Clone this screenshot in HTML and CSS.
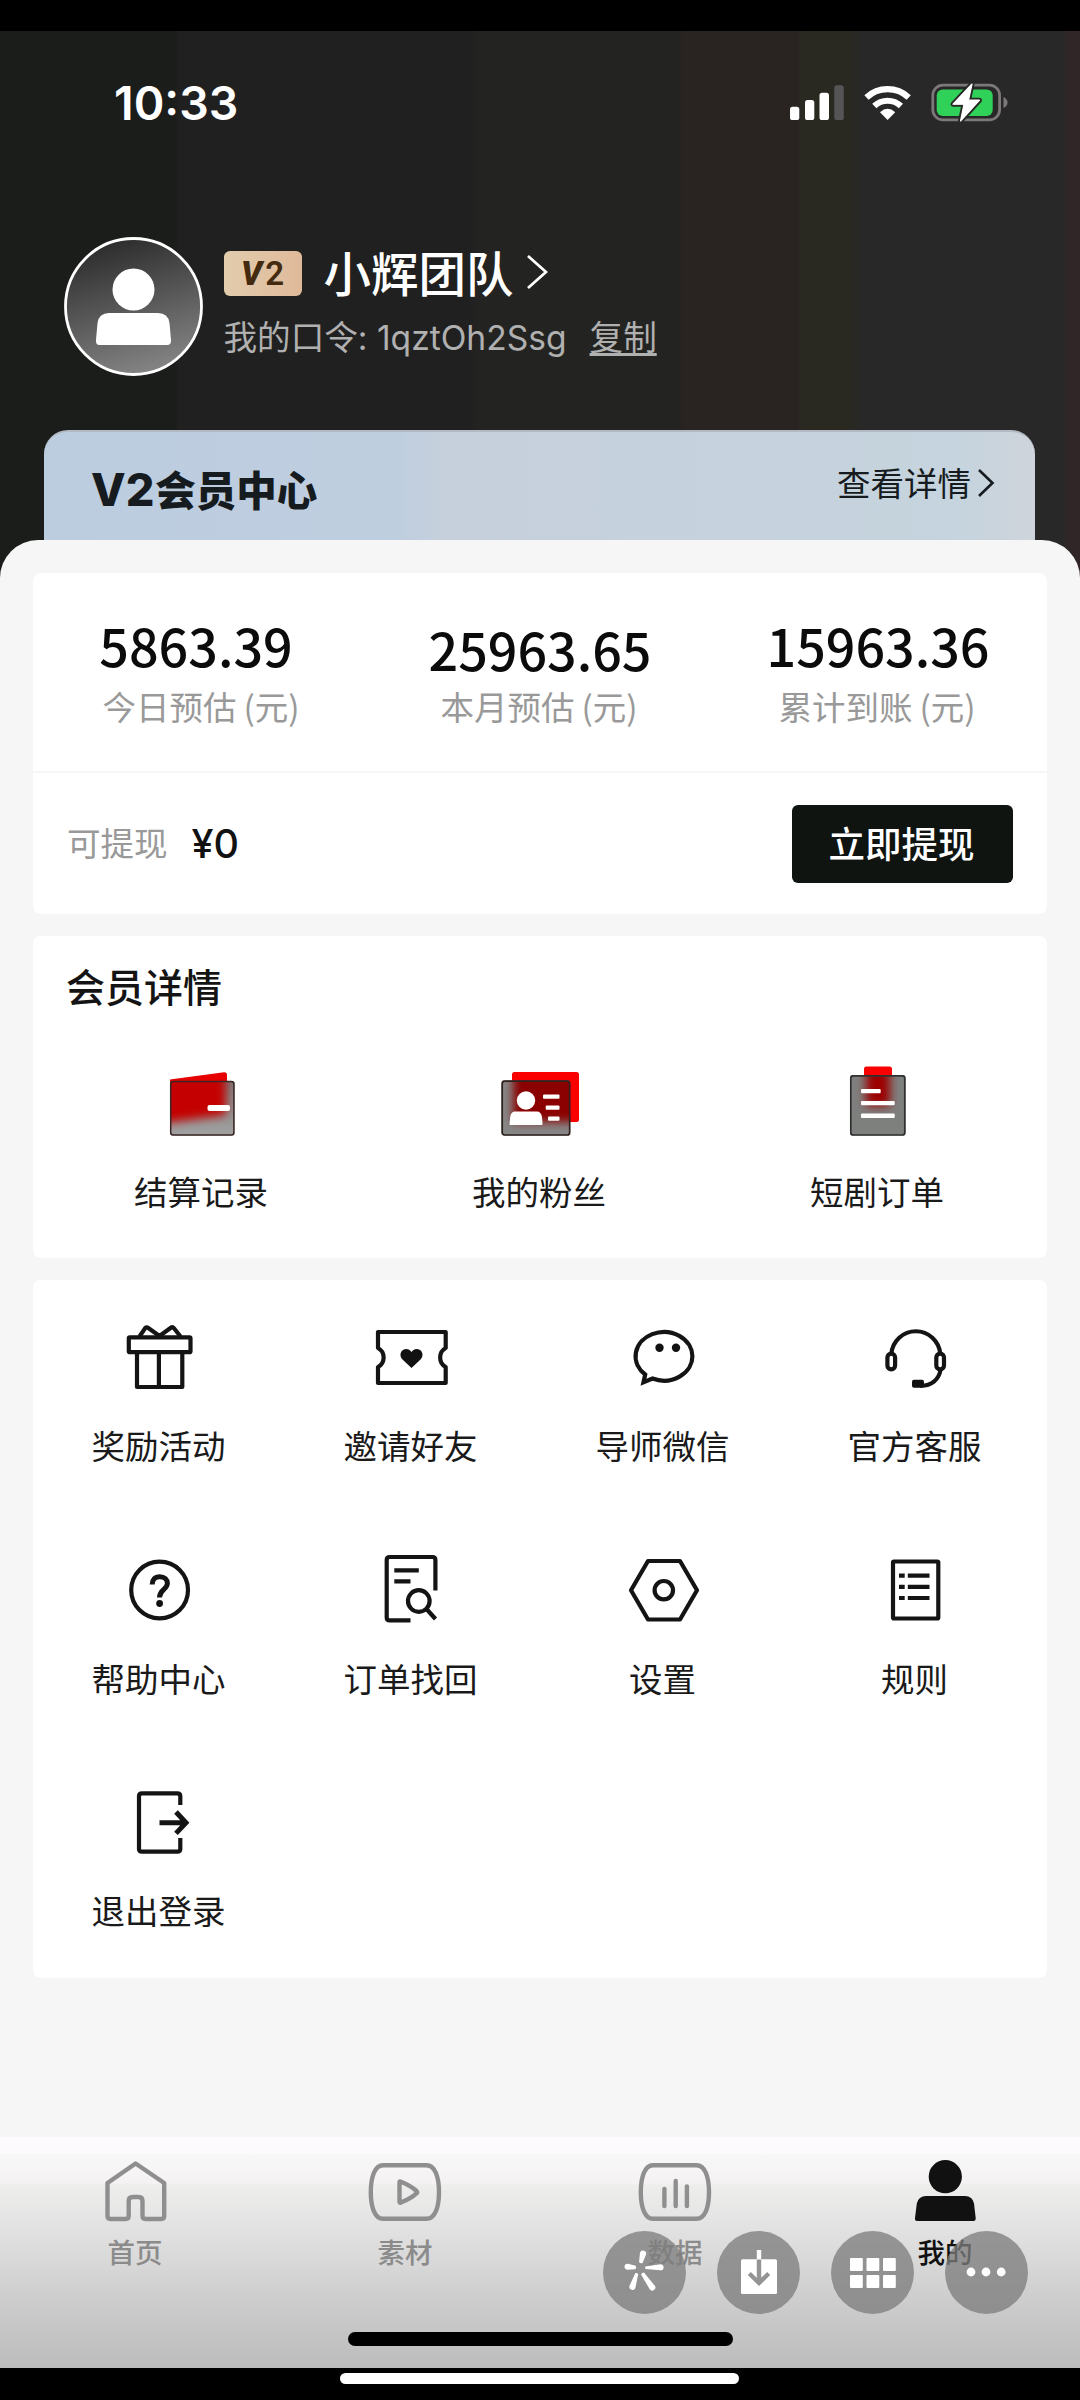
FILE: index.html
```html
<!DOCTYPE html>
<html lang="zh-CN">
<head>
<meta charset="utf-8">
<title>我的</title>
<link rel="stylesheet" href="styles.css">
</head>
<body>
<div class="phone">
  <header class="hero">
    <div class="status">
      <span class="time">10:33</span>
      <svg class="status-icons" width="230" height="50" viewBox="0 0 230 50">
        <g fill="#fff">
          <rect x="5" y="28.700" width="9.300" height="13.300" rx="2.600"/>
          <rect x="20" y="22" width="9.300" height="20" rx="2.600"/>
          <rect x="34.500" y="14.700" width="9.500" height="27.300" rx="2.600"/>
          <rect x="49.300" y="7.300" width="9.500" height="34.700" rx="2.600" fill="#555556"/>
        </g>
        <g fill="none" stroke="#fff" stroke-width="6.200">
          <path d="M81.500 19.500 A31 31 0 0 1 123.700 19.500"/>
          <path d="M89.300 28 A19.500 19.500 0 0 1 115.900 28"/>
        </g>
        <path d="M102.600 42 L95 34.200 Q102.600 27.500 110.200 34.200 Z" fill="#fff"/>
        <rect x="147.800" y="7.200" width="66.800" height="34.600" rx="10" fill="none" stroke="#7d7878" stroke-width="2.800"/>
        <path d="M218.500 19 Q222.500 21 222.500 24.500 Q222.500 28 218.500 30 Z" fill="#7d7878"/>
        <rect x="151.700" y="11.600" width="56" height="26.400" rx="6" fill="#30d158"/>
        <path d="M187 6 L168 26.200 H179 L175.500 43 L194.500 22.200 H183.500 Z" fill="#fff" stroke="#262826" stroke-width="5" stroke-linejoin="round" paint-order="stroke"/>
        <path d="M187 6 L168 26.200 H179 L175.500 43 L194.500 22.200 H183.500 Z" fill="#fff" stroke="#fff" stroke-width="1.200" stroke-linejoin="round"/>
      </svg>
    </div>
    <div class="profile">
      <svg class="avatar" width="139" height="139" viewBox="0 0 139 139">
        <defs><linearGradient id="av" x1=".3" y1="0" x2=".6" y2="1"><stop offset="0" stop-color="#2a2a2a"/><stop offset="1" stop-color="#858585"/></linearGradient></defs>
        <circle cx="69.500" cy="69.500" r="68" fill="url(#av)" stroke="#fff" stroke-width="2.800"/>
        <circle cx="69.500" cy="52.500" r="21" fill="#fff"/>
        <path d="M45 76 H94 Q104 76 105.500 86 L107 103 Q107.500 108 103 108 H35.500 Q31.500 108 32 103 L33.500 86 Q35 76 45 76 Z" fill="#fff"/>
      </svg>
      <div class="who">
        <div class="name-row">
          <span class="level"><i>V</i><b>2</b></span>
          <span class="name">小辉团队</span>
          <svg width="22" height="36" viewBox="0 0 22 36"><path d="M2 2 L20 18 L2 34" fill="none" stroke="#fff" stroke-width="2.800"/></svg>
        </div>
        <div class="code-row"><span>我的口令: </span><span class="code">1qztOh2Ssg</span><span class="copy">复制</span></div>
      </div>
    </div>
    <div class="vip">
      <span class="vip-title"><span class="vip-level">V2</span>会员中心</span>
      <span class="vip-more">查看详情<svg width="18" height="30" viewBox="0 0 18 30"><path d="M2 2 L15.500 15 L2 28" fill="none" stroke="#161b20" stroke-width="2.600"/></svg></span>
    </div>
  </header>

  <main class="panel">
    <section class="card">
      <div class="stats">
        <div class="stat stat-today"><strong>5863.39</strong><span>今日预估<em>(元)</em></span></div>
        <div class="stat stat-month"><strong>25963.65</strong><span>本月预估<em>(元)</em></span></div>
        <div class="stat"><strong>15963.36</strong><span>累计到账<em>(元)</em></span></div>
      </div>
      <div class="withdraw">
        <span class="wd-label">可提现</span><span class="wd-value">¥0</span>
        <button class="wd-btn">立即提现</button>
      </div>
    </section>

    <section class="card member">
      <h2>会员详情</h2>
      <div class="trio">
        <div class="entry">
          <svg width="90" height="80" viewBox="0 0 90 80">
            <defs>
              <filter id="soft" x="-50%" y="-50%" width="200%" height="200%"><feGaussianBlur stdDeviation="5"/></filter>
              <clipPath id="c1"><rect x="13" y="17" width="64.500" height="54.500" rx="2.500"/></clipPath>
              <clipPath id="c2"><rect x="6.500" y="16.500" width="68.500" height="55" rx="2.500"/></clipPath>
              <clipPath id="c3"><rect x="17" y="11" width="55.500" height="60.500" rx="2.500"/></clipPath>
              <linearGradient id="g1" x1="0" y1="0" x2="0" y2="1"><stop offset="0" stop-color="#7c7c7c"/><stop offset="1" stop-color="#a2a2a2"/></linearGradient>
            </defs>
            <path d="M13 15.500 L67 8.200 Q70 8 70 11 V20 H13 Z" fill="#e60000"/>
            <g clip-path="url(#c1)"><rect x="13" y="17" width="65" height="55" fill="url(#g1)"/><path d="M0 5 H69 V51 L0 60 Z" fill="#c40000" filter="url(#soft)"/></g>
            <rect x="13.700" y="17.500" width="63.200" height="53.500" rx="2.500" fill="none" stroke="#3a2626" stroke-width="1.500"/>
            <rect x="50.500" y="41" width="22.500" height="6" rx="2" fill="#fff"/>
          </svg>
          <span>结算记录</span>
        </div>
        <div class="entry">
          <svg width="90" height="80" viewBox="0 0 90 80">
            <rect x="17" y="8" width="67" height="50" rx="2.500" fill="#fb0000"/>
            <g clip-path="url(#c2)"><rect x="6" y="16" width="70" height="56" fill="#868686"/><rect x="18" y="8" width="67" height="50" fill="#8b0000" filter="url(#soft)"/></g>
            <rect x="7.200" y="17.200" width="67.500" height="53.800" rx="2.500" fill="none" stroke="#2f2020" stroke-width="1.700"/>
            <g fill="#fff"><circle cx="31" cy="36.500" r="9.200"/><path d="M20 47.500 H42 Q46 47.500 47 53 L47.600 60 Q47.600 61 46.500 61 H15.500 Q14.400 61 14.500 60 L15.200 53 Q16 47.500 20 47.500 Z"/><rect x="48" y="30.500" width="16.500" height="4.300" rx="1"/><rect x="50.700" y="41.500" width="13.800" height="4.300" rx="1"/><rect x="53" y="52.400" width="11.500" height="4.300" rx="1"/></g>
          </svg>
          <span>我的粉丝</span>
        </div>
        <div class="entry">
          <svg width="90" height="80" viewBox="0 0 90 80">
            <rect x="31" y="2.500" width="28" height="28" rx="2.500" fill="#fb0000"/>
            <g clip-path="url(#c3)"><rect x="17" y="11" width="56" height="61" fill="#7e807e"/><rect x="33" y="2" width="24" height="40" fill="#9c0000" filter="url(#soft)"/></g>
            <rect x="17.800" y="11.800" width="54" height="59.200" rx="2.500" fill="none" stroke="#303030" stroke-width="1.700"/>
            <g fill="#fff"><rect x="28" y="25" width="19.700" height="4.300" rx="1"/><rect x="28" y="37" width="33.700" height="4.300" rx="1"/><rect x="28" y="49.600" width="33.700" height="4.300" rx="1"/></g>
          </svg>
          <span>短剧订单</span>
        </div>
      </div>
    </section>

    <section class="card tools">
      <div class="tool">
        <svg viewBox="0 0 90 90"><path d="M25.500 24.500 L31 16.300 Q32.300 14.500 34.300 16 L45.500 24 L56.500 16 Q58.500 14.500 60 16.300 L66.500 24.500"/><rect x="14.800" y="25.300" width="61.700" height="14.900" rx="1"/><path d="M23 40 V75 H68.300 V40 M44.900 40 V75"/></svg>
        <span>奖励活动</span>
      </div>
      <div class="tool">
        <svg viewBox="0 0 90 90"><path d="M12 20 H79.700 V36 C72.300 40 72.300 51 79.700 55 V71 H12 V55 C19.500 51 19.500 40 12 36 Z"/><path class="solid" d="M45.500 55.900 L36.500 47.500 C33.500 44.500 34 40 37 38 C40 36 43.500 37 45.500 40 C47.500 37 51 36 54 38 C57 40 57.500 44.500 54.500 47.500 Z"/></svg>
        <span>邀请好友</span>
      </div>
      <div class="tool">
        <svg viewBox="0 0 90 90"><path transform="translate(-1.500 0)" stroke-linejoin="miter" d="M28.700 62.500 L27 70.200 L36 66.500 A28.400 24.300 0 1 0 28.700 62.500 Z"/><circle class="solid" cx="41.500" cy="35.700" r="4.200"/><circle class="solid" cx="58" cy="35.700" r="4.200"/></svg>
        <span>导师微信</span>
      </div>
      <div class="tool">
        <svg viewBox="0 0 90 90"><path d="M21.300 42 A24.600 25 0 0 1 70.300 42"/><rect x="17.400" y="41.700" width="7.700" height="15.600" rx="3.850"/><rect x="66.300" y="41.700" width="7.700" height="15.600" rx="3.850"/><path d="M70.500 58 C69 67 62 74 50 73.700"/><rect class="solid" x="42" y="67.700" width="12" height="8" rx="2"/></svg>
        <span>官方客服</span>
      </div>
      <div class="tool">
        <svg viewBox="0 0 90 90"><circle cx="45.600" cy="45" r="28.400"/><path stroke-width="5" d="M38.200 39.500 C38.200 34.500 41 31.700 45.800 31.700 C50.500 31.700 53.400 34.500 53.400 38.300 C53.400 44.500 45.500 44.500 45.500 52.500"/><circle class="solid" cx="45.600" cy="58.500" r="3.400"/></svg>
        <span>帮助中心</span>
      </div>
      <div class="tool">
        <svg viewBox="0 0 90 90"><path d="M69.400 45.500 V15 Q69.400 12 66.400 12 H23.700 Q20.700 12 20.700 15 V72.400 Q20.700 75.400 23.700 75.400 H44.500 M28.300 25.400 H52.800 M28.300 36.400 H44.500 M60.500 64 L69.500 74"/><circle cx="52.800" cy="56" r="10.800"/></svg>
        <span>订单找回</span>
      </div>
      <div class="tool">
        <svg viewBox="0 0 90 90"><path d="M30 16 H62 L79 45.200 L62 74.500 H30 L13 45.200 Z"/><circle cx="45.800" cy="45.200" r="9.200"/></svg>
        <span>设置</span>
      </div>
      <div class="tool">
        <svg viewBox="0 0 90 90"><rect x="23" y="16.500" width="45.300" height="57" rx="1"/><path d="M29 30.700 H34.700 M37.800 30.700 H59.500 M29 41.800 H34.700 M37.800 41.800 H59.500 M29 53 H34.700 M37.800 53 H59.500"/></svg>
        <span>规则</span>
      </div>
      <div class="tool">
        <svg viewBox="0 0 90 90"><path d="M66.300 28 V19 Q66.300 16.300 63.300 16.300 H28 Q25 16.300 25 19 V72 Q25 74.700 28 74.700 H63.300 Q66.300 74.700 66.300 72 V61"/><path stroke-width="5" stroke-linejoin="miter" d="M45.500 45.700 H71 M62 35 L72 45.700 L62 56.400"/></svg>
        <span>退出登录</span>
      </div>
    </section>
  </main>

  <nav class="tabbar">
    <div class="tab"><svg viewBox="0 0 80 70"><path d="M40.600 8.500 L69.200 28 V61 Q69.200 64 66.200 64 H50.500 Q47.500 64 47.500 61 V46 Q47.500 42 43.500 42 H37.700 Q33.700 42 33.700 46 V61 Q33.700 64 30.700 64 H15.500 Q12.500 64 12.500 61 V28 Z"/></svg><span>首页</span></div>
    <div class="tab"><svg viewBox="0 0 80 70"><path d="M18 10.200 H61.500 C70 10.200 74 22 74 37.200 C74 52 70 63.800 61.500 63.800 H18 C9.800 63.800 5.800 52 5.800 37.200 C5.800 22 9.800 10.200 18 10.200 Z M34.500 27 Q34.500 26 36 26.800 Q46 31 51.500 36 Q52.700 37.200 51.500 38.400 Q46 43.500 36 47.500 Q34.500 48.300 34.500 47 Z"/></svg><span>素材</span></div>
    <div class="tab"><svg viewBox="0 0 80 70"><path d="M18 10.200 H61.500 C70 10.200 74 22 74 37.200 C74 52 70 63.800 61.500 63.800 H18 C9.800 63.800 5.800 52 5.800 37.200 C5.800 22 9.800 10.200 18 10.200 Z M29.400 34 V51 M40.700 26 V51 M51.900 31.500 V51"/></svg><span>数据</span></div>
    <div class="tab active"><svg viewBox="0 0 80 70"><circle cx="40.300" cy="21.700" r="16.600"/><path d="M21 41 H60 Q67.500 41 69 48.500 L70.700 63 Q70.900 66 68.500 66 H12 Q9.700 66 10 63 L11.800 48.500 Q13.500 41 21 41 Z"/></svg><span>我的</span></div>
    <div class="home-bar"></div>
    <div class="floats">
      <svg viewBox="0 0 83 83"><circle class="disc" cx="41.500" cy="41.500" r="41.500"/><g fill="#fff"><path d="M-1.800 0 L-3.100 -9 A3.100 3.100 0 0 1 3.100 -9 L1.800 0 Q0 1.500 -1.800 0 Z" transform="translate(37.800 31.500) rotate(14)"/><path d="M-1.700 0 L-3 -8 A3 3 0 0 1 3 -8 L1.700 0 Q0 1.500 -1.700 0 Z" transform="translate(32.500 36.500) rotate(-84)"/><path d="M-1.200 0 L-3.100 -15 A3.100 3.100 0 0 1 3.100 -15 L1.200 0 Q0 1 -1.200 0 Z" transform="translate(42.500 36.800) rotate(88)"/><path d="M-1.500 0 L-3.100 -14 A3.100 3.100 0 0 1 3.100 -14 L1.500 0 Q0 1 -1.500 0 Z" transform="translate(33.800 42.500) rotate(-162)"/><path d="M-1.800 0 L-3.100 -17 A3.100 3.100 0 0 1 3.100 -17 L1.800 0 Q0 1 -1.800 0 Z" transform="translate(39.500 42.500) rotate(145)"/></g></svg>
      <svg viewBox="0 0 83 83"><circle class="disc" cx="41.500" cy="41.500" r="41.500"/><rect x="24" y="28.300" width="36" height="34.700" rx="1.500" fill="#fff"/><path d="M42 19 V29" stroke="#fff" stroke-width="4.400"/><path d="M42 28.500 V51 M32.300 42.500 L42 52 L51.700 42.500" fill="none" stroke="#949494" stroke-width="4.400"/></svg>
      <svg viewBox="0 0 83 83"><circle class="disc" cx="41.500" cy="41.500" r="41.500"/><g fill="#fff"><rect x="19" y="27" width="12.800" height="13" rx="1"/><rect x="35.500" y="27" width="12.800" height="13" rx="1"/><rect x="52" y="27" width="12.800" height="13" rx="1"/><rect x="19" y="44" width="12.800" height="13" rx="1"/><rect x="35.500" y="44" width="12.800" height="13" rx="1"/><rect x="52" y="44" width="12.800" height="13" rx="1"/></g></svg>
      <svg viewBox="0 0 83 83"><circle class="disc" cx="41.500" cy="41.500" r="41.500"/><g fill="#fff"><circle cx="26" cy="41" r="4.400"/><circle cx="41" cy="41" r="4.400"/><circle cx="56.200" cy="41" r="4.400"/></g></svg>
    </div>
  </nav>
  <footer class="gesture"><div class="gesture-bar"></div></footer>
</div>
</body>
</html>
```
FILE: styles.css
```css
* { box-sizing: border-box; }
body { margin: 0; background: #000; font-family: Inter, "Noto Sans CJK SC", sans-serif; }
svg { display: block; flex: none; }
.phone { width: 1080px; height: 2400px; padding-top: 31px; display: flex; flex-direction: column; background: #000; overflow: hidden; }

.hero {
  flex: none; height: 569px; padding: 47px 0 0;
  background: linear-gradient(90deg, #1b1d1a 0 175px, #202020 179px 470px, #232422 480px 679px, #292322 683px 797px, #292922 801px 852px, #282828 860px 1063px, #302627 1067px);
}
.status { height: 50px; display: flex; justify-content: space-between; padding: 0 65px 0 114px; }
.time { color: #fff; font-size: 46.500px; font-weight: 600; line-height: 50px; }
.profile { display: flex; gap: 21px; margin: 109px 0 0 63.500px; height: 139px; }
.who { padding-top: 11px; }
.name-row { display: flex; align-items: center; height: 48px; }
.level {
  width: 78px; height: 45px; margin-top: 3px; border-radius: 6px; display: flex; align-items: center; justify-content: center; gap: 3px;
  background: linear-gradient(90deg, #e2cdad, #dfb99a); color: #442a0e; font: 700 33px/45px Roboto, sans-serif;
}
.level i { font-style: italic; font-weight: 900; }
.level b { font-weight: 600; }
.name { color: #fff; font-size: 47.500px; font-weight: 500; line-height: 48px; margin: 0 12px 0 22px; font-family: "Noto Sans CJK SC", sans-serif; }
.code-row { margin-top: 22px; display: flex; color: #b0b0b0; font-size: 33.600px; line-height: 40px; white-space: pre; font-weight: 400; }
.copy { margin-left: 23px; text-decoration: underline; text-decoration-thickness: 3px; text-underline-offset: 3px; }
.vip {
  width: 991px; height: 150px; margin: 54px 0 0 44px; padding: 0 40px 0 47px; border-radius: 24px 24px 0 0; border-top: 2px solid #b3b9c2;
  background: linear-gradient(90deg, #bccde0 0, #bfcedf 36%, #c5d0dc 40%, #c6d2dd 74%, #c5d4de 92%, #cfd4db 100%);
  display: flex; justify-content: space-between; color: #161b20;
}
.vip-title { font: 900 40.500px/50px "Noto Sans CJK SC", sans-serif; margin-top: 32px; white-space: nowrap; }
.vip-level { font: 800 45px/50px Inter, sans-serif; margin-right: 1px; }
.vip-more { display: flex; gap: 6px; align-items: center; height: 40px; font-size: 33.500px; margin-top: 29px; font-family: "Noto Sans CJK SC", sans-serif; }
.vip-more svg { margin-top: 4px; }

.panel { flex: none; position: relative; height: 1597px; margin-top: -60px; background: #f6f6f6; border-radius: 38px 38px 0 0; padding: 33px 33px 0; display: flex; flex-direction: column; gap: 22px; font-family: "Noto Sans CJK SC", sans-serif; }
.card { background: #fff; border-radius: 8px; flex: none; width: 1014px; }
.stats { display: grid; grid-template-columns: repeat(3, 338px); height: 200px; padding-top: 42px; border-bottom: 2px solid #f7f7f7; }
.stat { display: flex; flex-direction: column; align-items: center; }
.stat strong { font-size: 52px; font-weight: 500; line-height: 60px; color: #0b0b0b; }
.stat span { font-size: 33.500px; line-height: 40px; margin-top: 11px; color: #999; padding-right: 2px; }
.stat em { font-style: normal; margin-left: 7px; }
.stat-today strong { padding-right: 12px; }
.stat-month strong { margin-top: 4px; margin-bottom: -4px; }
.withdraw { display: flex; align-items: center; height: 141px; padding: 0 34px; }
.wd-label { font-size: 33.500px; line-height: 40px; color: #999; margin-top: -4px; }
.wd-value { font: 500 39.500px/40px Inter, sans-serif; color: #111; margin-left: 24px; }
.wd-btn { margin-left: auto; width: 221px; height: 78px; border: 0; border-radius: 6px; background: #0f1411; color: #fff; font: 500 36.500px/73px "Noto Sans CJK SC", sans-serif; padding: 0 2px 3px 0; }

.member { height: 322px; padding-top: 26px; }
.member h2 { margin: 0 0 0 33px; font-size: 39px; font-weight: 500; line-height: 46px; color: #141414; }
.trio { display: grid; grid-template-columns: repeat(3, 338px); margin-top: 56px; }
.entry { display: flex; flex-direction: column; align-items: center; gap: 27px; font-size: 33.500px; line-height: 40px; color: #1a1a1a; }
.entry span { padding-right: 2px; }
.tools { height: 698px; padding-top: 32px; display: grid; grid-template-columns: repeat(4, 252px); grid-auto-rows: 232.670px; }
.tool { display: flex; flex-direction: column; align-items: center; gap: 23px; font-size: 33.500px; line-height: 40px; color: #1a1a1a; }
.tool span { padding-right: 1px; }
.tool svg { width: 90px; height: 90px; fill: none; stroke: #141414; stroke-width: 4.200; stroke-linejoin: round; }
.tool .solid { fill: #111; stroke: none; }

.tabbar {
  flex: none; height: 231px; position: relative; display: grid; grid-template-columns: repeat(4, 270px); padding-top: 18px;
  background: linear-gradient(180deg, #fdfbfe 0, #fcfafd 16px, #f7f7f7 18px, #f6f2f4 46px, #eeeeed 48px, #dedede 105px, #cecece 160px, #bcbcbc 231px);
}
.tab { display: flex; flex-direction: column; align-items: center; gap: 9px; font: 500 27.500px/34px "Noto Sans CJK SC", sans-serif; color: #8b8b8b; }
.tab svg { width: 80px; height: 70px; fill: none; stroke: #8f8f8f; stroke-width: 4.400; stroke-linejoin: round; stroke-linecap: round; }
.tab.active { color: #111; }
.tab.active svg { fill: #111; stroke: none; }
.home-bar { position: absolute; left: 348px; top: 195px; width: 385px; height: 14px; border-radius: 7px; background: #000; }
.floats { position: absolute; left: 603px; top: 94px; display: flex; gap: 31px; }
.floats svg { width: 83px; height: 83px; }
.disc { fill: rgba(125, 125, 125, .77); }
.gesture { flex: none; height: 32px; padding: 5px 2px 0 0; background: #000; }
.gesture-bar { width: 399px; height: 11px; margin: 0 auto; border-radius: 6px; background: #fff; }
```
